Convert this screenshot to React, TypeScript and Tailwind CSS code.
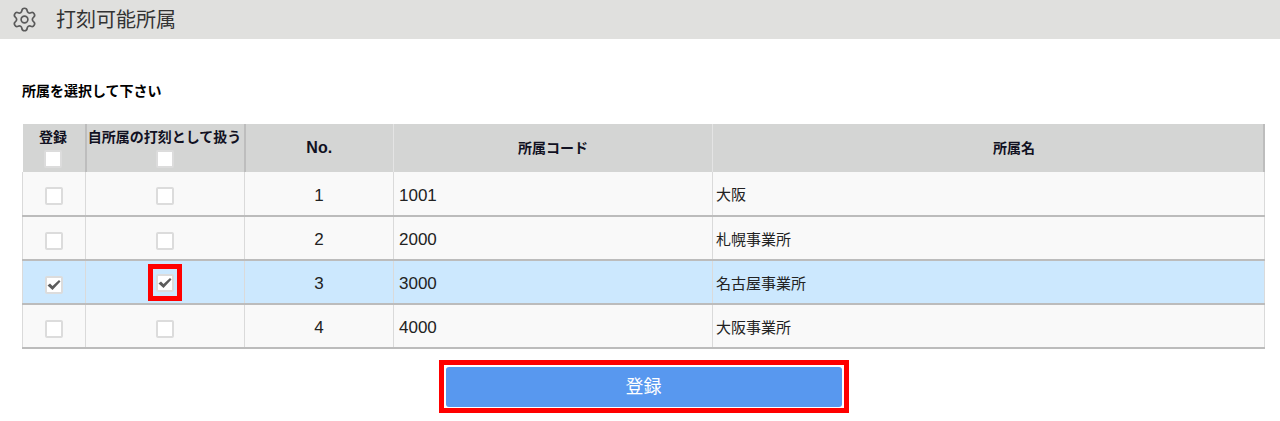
import { Settings } from "lucide-react";

const rows = [
  { no: 1, code: "1001", name: "大阪", checked: false },
  { no: 2, code: "2000", name: "札幌事業所", checked: false },
  { no: 3, code: "3000", name: "名古屋事業所", checked: true },
  { no: 4, code: "4000", name: "大阪事業所", checked: false }
];

function Box({ checked = false }: { checked?: boolean }) {
  return (
    <span className="inline-flex h-[18px] w-[18px] items-center justify-center rounded-[2px] border-2 border-[#dcdcdc] bg-white align-middle">
      {checked && (
        <svg width="14" height="12" viewBox="0 0 14 12" className="text-[#5c5c5c]">
          <path d="M0.5 6.5 L3 4.5 L5.5 7 L12 1 L13.5 2.5 L5.5 11 Z" fill="currentColor" />
        </svg>
      )}
    </span>
  );
}

export default function App() {
  return (
    <div className="h-[421px] w-[1280px] overflow-hidden bg-white font-['Liberation_Sans','Noto_Sans_CJK_JP',sans-serif] text-[#222222]">
      <div className="flex h-[39px] items-center bg-[#e0e0de] pl-[11px]">
        <Settings size={27} strokeWidth={1.5} className="text-[#5a5a5a]" />
        <h1 className="ml-[18px] text-[20px] text-[#333333]">打刻可能所属</h1>
      </div>
      <p className="mt-[43px] ml-[22px] text-[14px] leading-[18px] font-bold text-black">所属を選択して下さい</p>
      <div className="mt-[24px] ml-[22px] w-[1243px]">
        <table className="w-full table-fixed border-collapse text-[15px]">
          <colgroup>
            <col className="w-[63px]" />
            <col className="w-[159px]" />
            <col className="w-[149px]" />
            <col className="w-[319px]" />
            <col />
          </colgroup>
          <thead>
            <tr className="h-[48px] bg-[#d4d5d4] text-[14px] font-bold text-[#111122]">
              <th className="border-r-2 border-[#bdbdbd] p-0 pt-[1px] pr-[1px] leading-[17px]">
                <div>登録</div>
                <div className="mt-[4px] leading-none"><Box /></div>
              </th>
              <th className="border-r-2 border-[#bdbdbd] p-0 pt-[1px] pr-[1px] leading-[17px] whitespace-nowrap">
                <div>自所属の打刻として扱う</div>
                <div className="mt-[4px] leading-none"><Box /></div>
              </th>
              <th className="border-r border-[#e4e4e4] p-0 text-[16px]">No.</th>
              <th className="border-r border-[#e4e4e4] p-0">所属コード</th>
              <th className="border-r-2 border-[#bdbdbd] p-0 pl-[52px]">所属名</th>
            </tr>
          </thead>
          <tbody>
            {rows.map((r) => (
              <tr key={r.no} className={`h-[44px] border-b-2 border-[#bcbcbc] ${r.checked ? "bg-[#cce8fe]" : "bg-[#f9f9f9]"}`}>
                <td className="border-x border-[#dadada] p-0 pt-[4px] pr-[1px] text-center"><Box checked={r.checked} /></td>
                <td className="border-r border-[#dadada] p-0 pt-[1px] pr-[1px] text-center">
                  {r.checked ? (
                    <span className="inline-flex h-[37px] w-[34px] items-center justify-center border-[5px] border-[#ff0000] align-middle">
                      <Box checked />
                    </span>
                  ) : (
                    <span className="inline-block pt-[3px]"><Box /></span>
                  )}
                </td>
                <td className="border-r border-[#dadada] p-0 pt-[4px] text-center text-[17px]">{r.no}</td>
                <td className="border-r border-[#dadada] px-[5px] py-0 pt-[4px] text-[17px]">{r.code}</td>
                <td className="border-r border-[#dadada] px-[3px] py-0 pt-[4px]">{r.name}</td>
              </tr>
            ))}
          </tbody>
        </table>
      </div>
      <div className="mt-[11px] flex justify-center pl-[7px]">
        <div className="border-[5px] border-[#ff0000] px-[2px] pt-[2px] pb-[1px]">
          <button className="h-[40px] w-[396px] rounded-[3px] bg-[#5898ef] text-[18px] text-white">登録</button>
        </div>
      </div>
    </div>
  );
}
